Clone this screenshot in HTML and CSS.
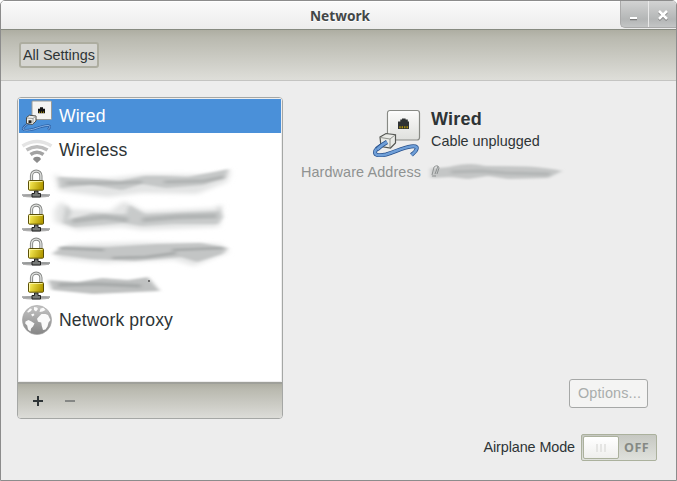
FILE: index.html
```html
<!DOCTYPE html>
<html lang="en">
<head>
<meta charset="utf-8">
<title>Network</title>
<link rel="stylesheet" href="styles.css">
</head>
<body>
<svg class="defs" width="0" height="0" aria-hidden="true">
  <defs>
    <linearGradient id="gold" x1="0" x2="1" y1="0" y2=".25"><stop offset="0" stop-color="#fff58a"/><stop offset=".3" stop-color="#e9da42"/><stop offset="1" stop-color="#b39a00"/></linearGradient>
    <linearGradient id="plate" x1="0" x2="0" y1="0" y2="1"><stop offset="0" stop-color="#fbfbfa"/><stop offset="1" stop-color="#dfe0dd"/></linearGradient>
    <linearGradient id="earth" x1="0" x2="0" y1="0" y2="1"><stop offset="0" stop-color="#c4c4c4"/><stop offset="1" stop-color="#858585"/></linearGradient>
    <filter id="soft" x="-10%" y="-50%" width="120%" height="200%"><feGaussianBlur stdDeviation="2 1.300"/></filter>
    <filter id="softer" x="-10%" y="-50%" width="120%" height="200%"><feGaussianBlur stdDeviation="3 2"/></filter>
    <symbol id="vpn" viewBox="0 0 32 32">
      <ellipse cx="15" cy="28" rx="13" ry="2" fill="#000" opacity=".15"/>
      <path d="M1 27h28" stroke="#66696a" stroke-width="1.200"/><path d="M2 28.400h26" stroke="#aaa" stroke-width="1"/>
      <path d="M13.500 23h3.500v2.500h2.500v3.500h-8.500v-3.500h2.500z" fill="#777a78" stroke="#222" stroke-width="1"/>
      <path d="M10.500 12.500V7.800a4.700 4.700 0 0 1 9.400 0V12.500" fill="none" stroke="#858785" stroke-width="3.200"/>
      <path d="M10.500 12.500V7.800a4.700 4.700 0 0 1 9.400 0V12.500" fill="none" stroke="#e2e3e1" stroke-width="1.300"/>
      <rect x="7.500" y="12.500" width="15" height="9.700" rx="1" fill="url(#gold)" stroke="#5b5006"/>
      <path d="M8.500 21V13.500h13" fill="none" stroke="#fffab5" stroke-width="1" opacity=".8"/>
    </symbol>
    <symbol id="wired" viewBox="0 0 48 48">
      <rect x="14.500" y="1.500" width="32" height="29.500" rx="2.500" fill="url(#plate)" stroke="#888a85" stroke-width="1.200"/>
      <path d="M16 29.500V3h29" stroke="#fff" fill="none"/>
      <path d="M25 20v-7.500h2.300v-2h1.700V9.500h3.600v1h2.200v2h1.200V20z" fill="#2e3233"/>
      <path d="M27 17.200v2M29.300 17.200v2M31.800 17.200v2M34.200 17.200v2" stroke="#c3a000" stroke-width="1.200"/>
      <path d="M13 34C6 37 2 41 2 43.500c0 3 5 3.500 11 2 10-3 17-7 25-8 6-.7 7 1 4.500 4.500-1 1.500-2.500 2.500-4 4" fill="none" stroke="#27508c" stroke-width="4"/>
      <path d="M13 34C6 37 2 41 2 43.500c0 3 5 3.500 11 2 10-3 17-7 25-8 6-.7 7 1 4.500 4.500-1 1.500-2.500 2.500-4 4" fill="none" stroke="#6f9fd8" stroke-width="2.500"/>
      <path d="M7 28l6-3.500 9.500 1.200v8.300l-5 5-9.500-1.500z" fill="#e9eae6" stroke="#555753" stroke-width="1.200"/>
      <path d="M7.500 28.500l9.500 1.500v8M17 30l5-4" fill="none" stroke="#888a85" stroke-width=".9"/>
      <path d="M14 33C10 35 7 37.500 4 40.500" fill="none" stroke="#27508c" stroke-width="4.500"/>
      <path d="M14 33C10 35 7 37.500 4 40.500" fill="none" stroke="#6f9fd8" stroke-width="2.800"/>
    </symbol>
    <symbol id="wired-small" viewBox="0 0 32 32">
      <rect x="11" y="1" width="19.500" height="18.500" rx=".8" fill="#f4f4f2" stroke="#9a9b97"/>
      <path d="M17 13.300V8.800h2V7.300h3v1.500h2v4.500z" fill="#111"/>
      <path d="M18.500 11.500v1.500M20.500 11.500v1.500M22.500 11.500v1.500" stroke="#a88d10" stroke-width=".9"/>
      <path d="M8 23C4 25.500 2 28 2 29c1 2 6 1.200 11 0 6-2 10-3.500 14-3.500 3 0 2 2.500 0 4" fill="none" stroke="#2b5fa5" stroke-width="2.400"/>
      <path d="M8 23C4 25.500 2 28 2 29c1 2 6 1.200 11 0 6-2 10-3.500 14-3.500 3 0 2 2.500 0 4" fill="none" stroke="#86b2e4" stroke-width="1"/>
      <path d="M5.500 17.500l3-2.300 6.500.8v5l-3.500 3.500-6-1z" fill="#f0f0ed" stroke="#4a4c49"/>
      <path d="M6 18l6 .5v5M12 18.500l3-2.500" fill="none" stroke="#8b8d89" stroke-width=".8"/>
      <rect x="7.500" y="20.300" width="3" height="2.800" fill="#222"/>
    </symbol>
  </defs>
</svg>
<div class="window">
  <header class="titlebar">
    <h1>Network</h1>
    <div class="controls">
      <span class="control"><svg width="27" height="27"><path d="M9 18.500h7" stroke="#777" stroke-width="1.500"/><path d="M9 17h7" stroke="#fff" stroke-width="2"/></svg></span>
      <span class="control"><svg width="27" height="27"><path d="M10 11l8 8M18 11l-8 8" stroke="#777" stroke-width="2.500"/><path d="M10 10l8 8M18 10l-8 8" stroke="#fff" stroke-width="2.500"/></svg></span>
    </div>
  </header>
  <nav class="toolbar"><button class="all">All Settings</button></nav>
  <main>
    <section class="sidebar">
      <ul>
        <li class="selected"><svg width="32" height="32"><use href="#wired-small"/></svg><span>Wired</span></li>
        <li><svg width="32" height="32" viewBox="0 0 32 32"><g fill="none" stroke-width="3.600"><path d="M1.500 12q14.500-9 29 0" stroke="#e4e4e4"/><path d="M5.500 16q10.500-6.500 21 0" stroke="#bdbdbd"/><path d="M9.500 20.500q6.500-4.500 13 0" stroke="#a3a3a3"/></g><path d="M16 29l-3.800-3.600q-.3-2.400 3.800-2.700 4.100.3 3.800 2.700z" fill="#8c8c8c"/></svg><span>Wireless</span></li>
        <li><svg width="32" height="32"><use href="#vpn"/></svg><svg class="smudge" width="190" height="34"><g filter="url(#softer)"><path d="M0 6l8 5 50 0 35-4 70 1 14-5-4 12-30 12-55-1-35 4-48-6z" fill="#e3e4e4"/></g><g filter="url(#soft)"><path d="M4 10l40 2 22 2 24-5 20 0 24 1 41-8-4 9-22 7-37 3-24-4-20 6-30-5-32 3z" fill="#c5c7c7"/><path d="M12 16l50 0 26-1M110 15l40-1 20-4" stroke="#b0b3b3" stroke-width="3.500" fill="none"/></g></svg></li>
        <li><svg width="32" height="32"><use href="#vpn"/></svg><svg class="smudge" width="190" height="34"><g filter="url(#softer)"><path d="M0 10l7-10 9 8 40 2 14-10 20 10 70-3 8-4-3 23-77 3-20-3-45 3-22-8z" fill="#e3e4e4"/></g><g filter="url(#soft)"><path d="M12 3l5 8-3 8 24-7 34 1 3-9 16 9 46-2 27-1 1-6 4 12-5 7-45 0-31 2-18-3-50 4-11-4z" fill="#c8caca"/><path d="M18 20l32-4 24 3M88 19l35-3 40-1" stroke="#b2b5b5" stroke-width="5" fill="none"/></g></svg></li>
        <li><svg width="32" height="32"><use href="#vpn"/></svg><svg class="smudge" width="190" height="34"><g filter="url(#softer)"><path d="M0 18l16-9 70-2 80 2 9 8-35 14-20-6-70 3-45-4z" fill="#e5e6e6"/></g><g filter="url(#soft)"><path d="M-2 19l12-8 43 1 50-3 44-1 27 5-6 6-25 8-16-5-46 4-44-2z" fill="#c3c5c5"/><path d="M5 13l45 2M118 15l51-2M58 23l34-1 30-4" stroke="#a5a8a8" stroke-width="2.500" fill="none"/></g></svg></li>
        <li><svg width="32" height="32"><use href="#vpn"/></svg><svg class="smudge" width="190" height="34"><g filter="url(#soft)"><path d="M-6 11l30 2 24-4 26 2 20-3 12 14-22 1-45 2-41-4z" fill="#bfc1c1"/><path d="M4 16l39-1 44 2" stroke="#a9acac" stroke-width="4" fill="none"/></g><circle cx="95" cy="12" r=".9" fill="#444"/></svg></li>
        <li><svg width="32" height="32" viewBox="0 0 32 32"><circle cx="16" cy="16" r="14.600" fill="url(#earth)" stroke="#a4a4a4" stroke-width=".6"/><path d="M4.500 17.500l3-1.500 3 1.500 3 2-1.500 3-2 2-.5 3-2.500-2-.8-4-2-2zM18 12.500l2.500-2.500h4l2.500 1 2.500 5-2 2.500-1 4-2 3-2.500.5-1.200-4-.6-3.500-3.200-.8-1-3zM13 3l3 .5 1 1.500-2 2.500-2-1.500zM18.500 8l1-3.500 3-.8 2 2.300-3 1.500zM9 4.500l2 .5-1 2-2.500 1.500-1.500-.5zM10 10.500l2.500-1 1 1.500-2 1.500z" fill="#fafafa"/></svg><span>Network proxy</span></li>
      </ul>
      <footer><svg width="80" height="34"><path d="M15 18h10M20 13v10" stroke="#2e3436" stroke-width="2"/><path d="M47 18h10" stroke="#858785" stroke-width="2"/></svg></footer>
    </section>
    <section class="panel">
      <div class="details">
        <svg class="device" width="48" height="48"><use href="#wired"/></svg>
        <div class="status"><h2>Wired</h2><p>Cable unplugged</p></div>
        <span class="label">Hardware Address</span>
        <svg class="address" width="140" height="20"><g filter="url(#soft)"><path d="M0 6q15 0 22-2 18-4 32 0 30 0 50 1 20 2 27 4l-14 7-40 1-20-3-20 3-17-2-20 1z" fill="#c4c6c6"/><path d="M20 10l30-1 25 2 44 1" stroke="#b3b6b6" stroke-width="3.500" fill="none"/></g><path d="M1 13l2-8q4-3 5 1l-2 6M4 12l3-8M1 14h4" stroke="#737777" fill="none" stroke-width=".7"/></svg>
      </div>
      <div class="actions">
        <button class="options" disabled>Options...</button>
        <div class="airplane"><span>Airplane Mode</span><div class="switch"><i class="knob"><b></b><b></b><b></b></i><span>OFF</span></div></div>
      </div>
    </section>
  </main>
</div>
</body>
</html>
```
FILE: styles.css
```css
* { box-sizing: border-box; margin: 0; padding: 0; }
body { width: 677px; height: 481px; overflow: hidden; background: #fff; color: #2e3436; font: 14.4px/17px "Liberation Sans", sans-serif; }
.defs { position: absolute; }
svg { display: block; flex: none; }
.window { height: 481px; border: 1px solid #8c8c8c; border-radius: 5px 5px 0 0; background: #ededed; display: flex; flex-direction: column; overflow: hidden; }
.titlebar { height: 29px; flex: none; display: grid; grid-template-columns: 1fr auto 1fr; border-bottom: 1px solid #868a80; background: linear-gradient(#fafafa, #ececec); box-shadow: inset 0 1px #fff; }
h1 { grid-column: 2; padding-left: 3px; font: bold 13.7px/29px "Noto Sans", sans-serif; color: #434748; text-shadow: 0 1px #fff; }
.controls { justify-self: end; display: flex; height: 27px; border: solid #aaa; border-width: 0 0 1px 1px; border-radius: 0 0 0 5px; background: linear-gradient(#d2d3d3, #b4b6b6 70%, #c3c5c5); }
.control + .control { border-left: 1px solid #e9e9e9; }
.toolbar { height: 51px; flex: none; padding: 12px 18px; border-bottom: 1px solid #c4c4c2; background: linear-gradient(#aeaea2, #b9b9af 15%, #deded9); }
button { font: inherit; color: inherit; }
.all { width: 80px; height: 26px; border: 2px solid #adada0; border-radius: 3px; background: #d5d5d1; white-space: nowrap; }
main { flex: 1; display: flex; padding: 16px 19px 19px 16px; }
.sidebar { width: 266px; height: 322px; display: flex; flex-direction: column; border: 1px solid #a5a7a5; border-radius: 4px; overflow: hidden; background: #fff; }
ul { height: 284px; list-style: none; border: 1px solid #eee; }
li { height: 34px; display: flex; align-items: center; gap: 6px; padding-left: 2px; font-size: 17.6px; letter-spacing: .12px; }
.selected { background: #4a90d9; color: #fff; }
.smudge { margin-left: -5px; overflow: visible; }
footer { flex: 1; border-top: 2px solid #9fa09a; background: linear-gradient(#aeaea2, #b9b9af 15%, #dcdcd8); }
footer svg { margin-top: -1px; }
.panel { flex: 1; display: flex; flex-direction: column; justify-content: space-between; }
.details { display: grid; grid-template-columns: 138px 140px; column-gap: 10px; padding-top: 12px; }
.device { justify-self: end; }
h2 { font: bold 18px/20px "Liberation Sans", sans-serif; letter-spacing: .2px; }
.status p { margin-top: 4px; }
.label { color: #8f9291; text-align: right; margin-top: 6px; line-height: 18px; white-space: nowrap; letter-spacing: .1px; }
.address { margin-top: 5px; overflow: visible; }
.actions { display: flex; flex-direction: column; align-items: flex-end; gap: 26px; }
.options { width: 79px; height: 29px; margin-right: 9px; border: 1px solid #a6a8a7; border-radius: 3px; background: #f4f4f3; color: #a9adac; font-size: 14.4px; letter-spacing: .15px; padding-left: 2px; }
.airplane { display: flex; align-items: center; gap: 6px; letter-spacing: -.1px; }
.switch { width: 76px; height: 27px; display: flex; align-items: center; padding: 1px; border: 1px solid #abb19d; border-radius: 2px; background: linear-gradient(#c6c8c2, #dfe1dc); font: bold 12.5px/25px "Open Sans", sans-serif; color: #858984; }
.switch span { margin-left: 5px; letter-spacing: .5px; }
.knob { width: 36px; height: 23px; display: flex; align-items: center; justify-content: center; gap: 2px; border: 1px solid #abb19d; border-radius: 2px; background: linear-gradient(#fff, #efefed); }
.knob b { width: 2px; height: 8px; background: #e5e5e3; }
```
